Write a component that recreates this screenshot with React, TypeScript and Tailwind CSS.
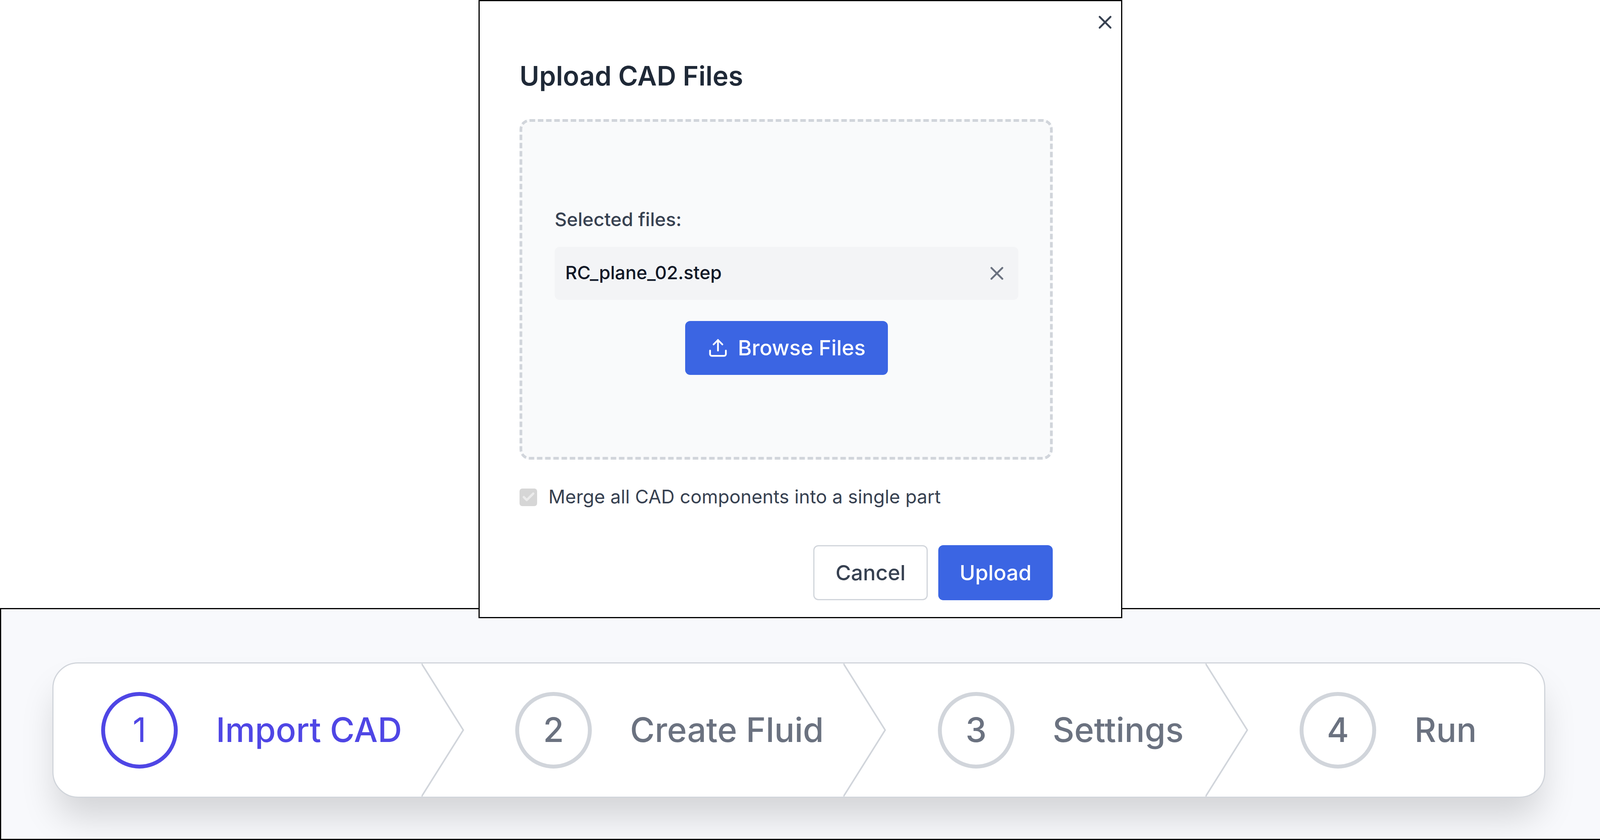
import React from "react";
import { X, Upload, Check } from "lucide-react";

function Chevron() {
  return (
    <svg viewBox="0 0 109 347" preserveAspectRatio="none" className="w-[109px] h-full shrink-0" fill="none">
      <path d="M0 0 L107 173.5 L0 347" stroke="#d1d5db" strokeWidth="4" />
    </svg>
  );
}

function Step({ n, label, active, pl, after }: { n: number; label: string; active?: boolean; pl: string; after: string }) {
  return (
    <div className={`flex items-center ${pl}`}>
      <div
        className={
          active
            ? "w-[196px] h-[196px] rounded-full border-[10px] border-[#4f46e5] text-[#4f46e5] flex items-center justify-center text-[86px] shrink-0"
            : "w-[196px] h-[196px] rounded-full border-[10px] border-[#d1d5db] text-[#6b7280] flex items-center justify-center text-[86px] font-medium shrink-0"
        }
      >
        {n}
      </div>
      <span className={`ml-[98px] text-[86px] font-medium whitespace-nowrap ${active ? "text-[#4f46e5]" : "text-[#6b7280]"} ${after}`}>{label}</span>
    </div>
  );
}

export default function App() {
  return (
    <div className="w-[4099px] h-[2151px] bg-white font-['Inter',sans-serif] overflow-hidden">
      <div className="relative z-10 ml-[1225px] w-[1648px] h-[1583px] -mb-[26px] bg-white border-[3px] border-black pl-[102px] pr-[175px] pt-[152px]">
        <button className="absolute right-[13px] top-[26px] text-[#374151]">
          <X size={56} strokeWidth={2} />
        </button>
        <h1 className="h-[80px] flex items-center text-[68.5px] font-semibold text-[#1f2937] mb-[70px] whitespace-nowrap">Upload CAD Files</h1>
        <div className="h-[872px] rounded-[26px] border-[7px] border-dashed border-[#d1d5db] bg-[#f9fafb] pl-[83px] pr-[81px] pt-[4px] flex flex-col justify-center">
          <div className="h-[70px] flex items-center text-[48px] font-medium text-[#374151] mb-[35px]">Selected files:</div>
          <div className="h-[136px] rounded-[13px] bg-[#f3f4f6] flex items-center justify-between pl-[27px] pr-[27px] mb-[54px]">
            <span className="text-[47px] font-medium text-[#111827] -mt-[3px]">RC_plane_02.step</span>
            <X size={56} strokeWidth={2} className="text-[#6b7280]" />
          </div>
          <button className="self-center w-[519px] h-[138px] rounded-[13px] bg-[#3b65e3] text-white flex items-center justify-center gap-[24px] text-[54px] font-medium">
            <Upload size={54} strokeWidth={2} />
            Browse Files
          </button>
        </div>
        <div className="mt-[61px] h-[70px] flex items-center">
          <div className="w-[45px] h-[45px] rounded-[7px] bg-[#d6d6d6] flex items-center justify-center shrink-0">
            <Check size={36} strokeWidth={4} className="text-[#ececec]" />
          </div>
          <span className="ml-[29px] text-[47.7px] text-[#374151] whitespace-nowrap">Merge all CAD components into a single part</span>
        </div>
        <div className="mt-[88px] flex justify-end gap-[27px]">
          <button className="w-[293px] h-[141px] rounded-[13px] bg-white border-[3px] border-[#d1d5db] text-[#374151] text-[54px] font-medium">Cancel</button>
          <button className="w-[293px] h-[141px] rounded-[13px] bg-[#3b65e3] text-white text-[54px] font-medium">Upload</button>
        </div>
      </div>
      <div className="h-[594px] bg-[#f8f9fc] border-[3px] border-black pl-[131px] pr-[140px] pt-[136px]">
        <div className="h-[347px] flex rounded-[66px] border-[3px] border-[#d1d5db] bg-white shadow-[0_60px_90px_-10px_rgba(0,0,0,0.15)]">
          <Step n={1} label="Import CAD" active pl="pl-[122px]" after="mr-[50px]" />
          <Chevron />
          <Step n={2} label="Create Fluid" pl="pl-[131px]" after="mr-[50px]" />
          <Chevron />
          <Step n={3} label="Settings" pl="pl-[133px]" after="mr-[56px]" />
          <Chevron />
          <Step n={4} label="Run" pl="pl-[132px]" after="" />
        </div>
      </div>
    </div>
  );
}
